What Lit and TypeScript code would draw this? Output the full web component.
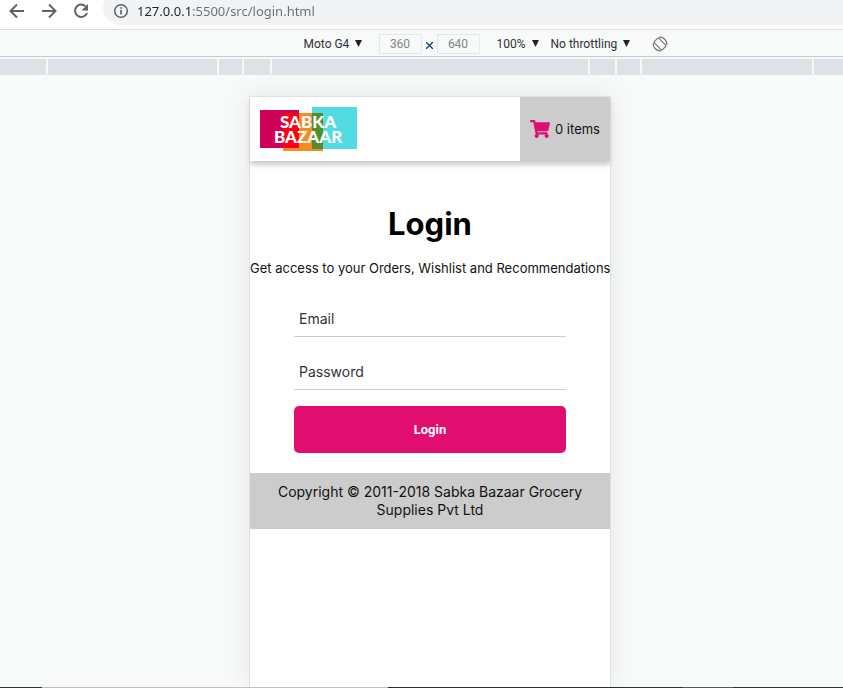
import { LitElement, html, css } from "lit";
import { customElement, property } from "lit/decorators.js";

@customElement("browser-bar")
export class BrowserBar extends LitElement {
  static styles = css`
    :host {
      display: block;
    }
    .bar {
      display: flex;
      height: 29px;
      padding-left: 6px;
      background: #fff;
      border-bottom: 1px solid #dadce0;
      overflow: hidden;
    }
    .nav {
      width: 32px;
      height: 22px;
      padding: 0;
      border: 0;
      background: none;
      text-align: left;
    }
    .nav svg {
      display: block;
    }
    .address {
      display: flex;
      flex: 1;
      align-items: center;
      height: 34px;
      margin: -9px 0 0 1px;
      padding-left: 9px;
      border-radius: 17px 0 0 17px;
      background: #f1f3f4;
    }
    .address svg {
      margin: 5px 7px 0 0;
    }
    .url {
      flex: 1;
      min-width: 0;
      margin-top: 6px;
      padding: 0;
      border: 0;
      outline: 0;
      font: 13px/20px "Noto Sans", "Open Sans", sans-serif;
      color: transparent;
      background: linear-gradient(90deg, #202124 53px, #6a6e73 53px);
      background-clip: text;
      -webkit-background-clip: text;
    }
  `;

  render() {
    return html`
      <nav class="bar" aria-label="Browser">
        <button class="nav" aria-label="Back">
          <svg width="22" height="22" viewBox="0 0 22 22" fill="none" stroke="#5f6368" stroke-width="2">
            <path d="M18 11H5M11 4.5L4.5 11L11 17.5" />
          </svg>
        </button>
        <button class="nav" aria-label="Forward">
          <svg width="22" height="22" viewBox="0 0 22 22" fill="none" stroke="#5f6368" stroke-width="2">
            <path d="M4 11H17M11 4.5L17.5 11L11 17.5" />
          </svg>
        </button>
        <button class="nav" aria-label="Reload">
          <svg width="22" height="22" viewBox="0 0 22 22" fill="none" stroke="#5f6368" stroke-width="2">
            <path d="M15.6 6.4A6.2 6.2 0 1 0 17 13" />
            <path d="M18 4V10.500H11.500Z" fill="#5f6368" stroke="none" />
          </svg>
        </button>
        <div class="address">
          <svg width="18" height="18" viewBox="0 0 18 18" fill="none" stroke="#5f6368">
            <circle cx="9" cy="9" r="6.300" stroke-width="1.500" />
            <path d="M9 8V12.500M9 5.200V6.800" stroke-width="1.700" />
          </svg>
          <input class="url" aria-label="Address" value="127.0.0.1:5500/src/login.html" />
        </div>
      </nav>
    `;
  }
}

@customElement("tool-select")
export class ToolSelect extends LitElement {
  @property() label = "";
  @property() value = "";

  static styles = css`
    :host {
      display: flex;
      align-items: center;
      gap: 5px;
    }
    .select {
      appearance: none;
      margin: 0;
      padding: 0;
      border: 0;
      background: none;
      color: #303134;
      font: inherit;
    }
  `;

  render() {
    return html`
      <select class="select" aria-label=${this.label}>
        <option>${this.value}</option>
      </select>
      <svg width="7" height="7" viewBox="0 0 7 7" fill="#222"><path d="M0 0H7L3.500 7Z" /></svg>
    `;
  }
}

@customElement("device-bar")
export class DeviceBar extends LitElement {
  static styles = css`
    :host {
      display: block;
    }
    .tools {
      display: flex;
      align-items: center;
      justify-content: center;
      height: 25px;
      padding: 1px 0 0 128px;
      border-bottom: 1px solid #c8cacc;
      font: 12px/16px Roboto, "Open Sans", sans-serif;
    }
    .size {
      box-sizing: border-box;
      width: 43px;
      height: 20px;
      padding: 0;
      border: 1px solid #e6e8e8;
      background: #f8faf9;
      color: #80868b;
      font: inherit;
      text-align: center;
    }
    .sizes {
      display: flex;
      align-items: center;
      gap: 4px;
      margin: 0 17px;
    }
    .times {
      margin-top: 3px;
    }
    .throttle {
      margin-left: 12px;
    }
    .rotate {
      width: 16px;
      height: 16px;
      margin-left: 22px;
      padding: 0;
      border: 0;
      background: none;
    }
    .rotate svg {
      display: block;
    }
    .ruler {
      display: grid;
      grid-template-columns: calc(50% - 376px) 169px 23px 26px 316px 25px 23px 170px 1fr;
      column-gap: 2px;
      height: 15px;
      margin-top: 2px;
      padding-bottom: 1px;
      background: linear-gradient(#f8faf9 15px, #dee1e6 15px);
    }
    .mark {
      background: #dee1e6;
    }
  `;

  render() {
    return html`
      <div class="tools">
        <tool-select label="Device" value="Moto G4"></tool-select>
        <div class="sizes">
          <input class="size" aria-label="Width" value="360" />
          <svg class="times" width="7" height="7" viewBox="0 0 7 7" stroke="#1a3c7c" stroke-width="1.300">
            <path d="M0 0L7 7M7 0L0 7" />
          </svg>
          <input class="size" aria-label="Height" value="640" />
        </div>
        <tool-select label="Zoom" value="100%"></tool-select>
        <tool-select class="throttle" label="Throttling" value="No throttling"></tool-select>
        <button class="rotate" aria-label="Rotate">
          <svg width="16" height="16" viewBox="0 0 16 16" fill="none" stroke="#777" stroke-width="1.200">
            <rect x="4.800" y="2.300" width="6.400" height="11.400" rx="1" transform="rotate(-45 8 8)" />
            <path d="M7 1.300A6.800 6.800 0 0 1 14.700 9M9 14.700A6.800 6.800 0 0 1 1.300 7" />
          </svg>
        </button>
      </div>
      <div class="ruler">${Array.from({ length: 9 }, () => html`<div class="mark"></div>`)}</div>
    `;
  }
}

@customElement("login-page")
export class LoginPage extends LitElement {
  static styles = css`
    :host {
      display: block;
      background: #fff;
      color: #111;
      font: 14px/18px Inter, "Liberation Sans", sans-serif;
    }
    .header {
      display: flex;
      justify-content: space-between;
      height: 64px;
      box-shadow: 0 4px 5px #ccc;
    }
    .logo {
      display: block;
      margin: 10px;
    }
    .logo-text {
      font: 900 17px Lato, sans-serif;
      fill: #fff;
    }
    .cart {
      display: flex;
      align-items: center;
      justify-content: center;
      gap: 5px;
      width: 90px;
      padding: 0;
      border: 0;
      background: #ccc;
      color: #111;
      font: 13px/18px Inter, sans-serif;
    }
    .intro {
      padding-top: 43px;
      text-align: center;
    }
    .title {
      margin: 0;
      color: #000;
      font-size: 31px;
      line-height: 40px;
      font-weight: 700;
    }
    .hint {
      margin: 15px 0 0;
      font-size: 13px;
      white-space: nowrap;
    }
    .form {
      display: flex;
      flex-direction: column;
      gap: 16px;
      margin: 23px 44px 20px;
    }
    .field {
      display: grid;
      border-bottom: 1px solid #ccc;
    }
    .label,
    .input {
      grid-area: 1 / 1;
    }
    .label {
      padding: 10px 5px 8px;
      color: #333;
      pointer-events: none;
    }
    .input {
      width: 100%;
      height: 36px;
      box-sizing: border-box;
      padding: 0 5px;
      border: 0;
      outline: 0;
      background: none;
      font: inherit;
    }
    .submit {
      height: 47px;
      border: 0;
      border-radius: 5px;
      background: #e10e70;
      color: #fff;
      font: 700 13px/18px Roboto, "Liberation Sans", sans-serif;
    }
    .footer {
      padding: 10px 20px;
      background: #ccc;
      text-align: center;
    }
  `;

  render() {
    return html`
      <header class="header">
        <svg class="logo" width="97" height="44" viewBox="0 0 97 44" role="img" aria-label="Sabka Bazaar">
          <path d="M0 3H39V41H0Z" fill="#cf0058" />
          <path d="M23 6H63V44H23Z" fill="#f68a23" />
          <path d="M52 0H97V42H52Z" fill="#52dbe3" />
          <path d="M23 6H39V41H23Z" fill="#fb0017" />
          <path d="M52 6H63V42H52Z" fill="#538c28" />
          <text class="logo-text"><tspan x="20" y="21">SABKA</tspan><tspan x="14" y="36">BAZAAR</tspan></text>
        </svg>
        <button class="cart">
          <svg width="20" height="18" viewBox="0 0 576 512" fill="#e10e70">
            <path
              d="M528 301L575 93C578 78 567 64 552 64H159L150 19C148 8 138 0 126 0H24C11 0 0 11 0 24V40C0 53 11 64 24 64H93L164 407A56 56 0 1 0 231 416H440A56 56 0 1 0 504 406L509 381C513 366 501 352 486 352H218L211 320H505C516 320 526 312 528 301Z"
            />
          </svg>
          <span>0 items</span>
        </button>
      </header>
      <main>
        <div class="intro">
          <h1 class="title">Login</h1>
          <p class="hint">Get access to your Orders, Wishlist and Recommendations</p>
        </div>
        <form class="form">
          <div class="field">
            <input class="input" id="email" type="email" />
            <label class="label" for="email">Email</label>
          </div>
          <div class="field">
            <input class="input" id="password" type="password" />
            <label class="label" for="password">Password</label>
          </div>
          <button class="submit" type="button">Login</button>
        </form>
      </main>
      <footer class="footer">Copyright © 2011-2018 Sabka Bazaar Grocery Supplies Pvt Ltd</footer>
    `;
  }
}

@customElement("app-root")
export class AppRoot extends LitElement {
  static styles = css`
    :host {
      display: flex;
      flex-direction: column;
      height: 100vh;
      overflow: hidden;
      background: #f8faf9;
    }
    .stage {
      display: flex;
      flex: 1;
      justify-content: center;
      min-height: 0;
      padding: 21px 0 0 17px;
      overflow: hidden;
    }
    .phone {
      width: 360px;
      border: 1px solid #e0e2e1;
      border-bottom: 0;
      box-shadow: 0 0 24px rgba(0, 0, 0, 0.08);
    }
    .edge {
      height: 1px;
      background: linear-gradient(
        90deg,
        #22313a 5%,
        #c0c0c0 5% 46%,
        #22313a 46% 81%,
        #4a5c5c 81% 87%,
        #22313a 87%
      );
    }
  `;

  render() {
    return html`
      <browser-bar></browser-bar>
      <device-bar></device-bar>
      <div class="stage"><login-page class="phone"></login-page></div>
      <div class="edge"></div>
    `;
  }
}
